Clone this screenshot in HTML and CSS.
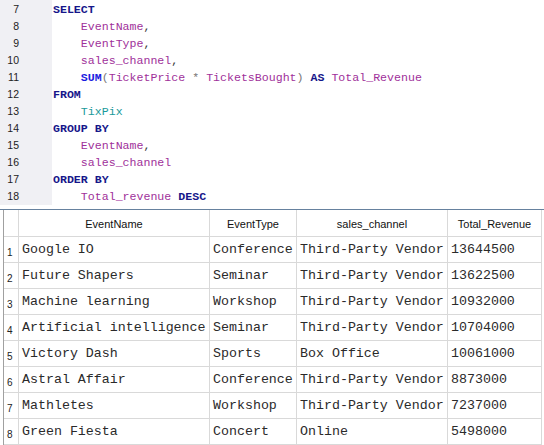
FILE: index.html
```html
<!DOCTYPE html>
<html>
<head>
<meta charset="utf-8">
<link rel="stylesheet" href="styles.css">
</head>
<body>
<div class="editor">
  <div class="gutter">
    <div class="ln">7</div><div class="ln">8</div><div class="ln">9</div><div class="ln">10</div>
    <div class="ln">11</div><div class="ln">12</div><div class="ln">13</div><div class="ln">14</div>
    <div class="ln">15</div><div class="ln">16</div><div class="ln">17</div><div class="ln">18</div>
  </div>
  <div class="code">
<div class="line"><span class="kw">SELECT</span></div>
<div class="line">    <span class="id">EventName</span><span class="p">,</span></div>
<div class="line">    <span class="id">EventType</span><span class="p">,</span></div>
<div class="line">    <span class="id">sales_channel</span><span class="p">,</span></div>
<div class="line">    <span class="fn">SUM</span><span class="op">(</span><span class="id">TicketPrice</span> <span class="op">*</span> <span class="id">TicketsBought</span><span class="op">)</span> <span class="kw">AS</span> <span class="id">Total_Revenue</span></div>
<div class="line"><span class="kw">FROM</span></div>
<div class="line">    <span class="tb">TixPix</span></div>
<div class="line"><span class="kw">GROUP BY</span></div>
<div class="line">    <span class="id">EventName</span><span class="p">,</span></div>
<div class="line">    <span class="id">sales_channel</span></div>
<div class="line"><span class="kw">ORDER BY</span></div>
<div class="line">    <span class="id">Total_revenue</span> <span class="kw">DESC</span></div>
  </div>
</div>
<div class="divider"></div>
<div class="results">
  <div class="grid">
    <div class="hd rn"></div>
    <div class="hd">EventName</div>
    <div class="hd">EventType</div>
    <div class="hd">sales_channel</div>
    <div class="hd">Total_Revenue</div>

    <div class="rn">1</div><div class="c">Google IO</div><div class="c">Conference</div><div class="c">Third-Party Vendor</div><div class="c">13644500</div>
    <div class="rn">2</div><div class="c">Future Shapers</div><div class="c">Seminar</div><div class="c">Third-Party Vendor</div><div class="c">13622500</div>
    <div class="rn">3</div><div class="c">Machine learning</div><div class="c">Workshop</div><div class="c">Third-Party Vendor</div><div class="c">10932000</div>
    <div class="rn">4</div><div class="c">Artificial intelligence</div><div class="c">Seminar</div><div class="c">Third-Party Vendor</div><div class="c">10704000</div>
    <div class="rn">5</div><div class="c">Victory Dash</div><div class="c">Sports</div><div class="c">Box Office</div><div class="c">10061000</div>
    <div class="rn">6</div><div class="c">Astral Affair</div><div class="c">Conference</div><div class="c">Third-Party Vendor</div><div class="c">8873000</div>
    <div class="rn">7</div><div class="c">Mathletes</div><div class="c">Workshop</div><div class="c">Third-Party Vendor</div><div class="c">7237000</div>
    <div class="rn">8</div><div class="c">Green Fiesta</div><div class="c">Concert</div><div class="c">Online</div><div class="c">5498000</div>
  </div>
</div>
</body>
</html>
```

FILE: styles.css
```css
html, body {
  margin: 0;
  padding: 0;
  background: #ffffff;
}
body {
  width: 544px;
  height: 445px;
  overflow: hidden;
}
.editor {
  display: flex;
  height: 209px;
  background: #ffffff;
}
.gutter {
  width: 52px;
  height: 205px;
  background: #f0f0f4;
  padding-top: 1px;
  box-sizing: border-box;
}
.ln {
  height: 17px;
  line-height: 17px;
  width: 19px;
  text-align: right;
  font-family: "Liberation Sans", Arial, sans-serif;
  font-size: 10.5px;
  color: #222222;
}
.code {
  padding-top: 1px;
  padding-left: 1px;
  font-family: "Liberation Mono", "Courier New", monospace;
  font-size: 11.6px;
  color: #333333;
}
.line {
  height: 17px;
  line-height: 17px;
  white-space: pre;
}
.kw { color: #16168a; font-weight: bold; }
.id { color: #a0309a; }
.fn { color: #1c1ce0; font-weight: bold; }
.tb { color: #1a9a9a; }
.op { color: #777777; }
.p { color: #333333; }
.divider {
  height: 1px;
  background: #66819e;
}
.results {
  padding-left: 3px;
}
.grid {
  display: grid;
  grid-template-columns: 14px 190px 86px 150px 93px;
  grid-template-rows: 26px repeat(8, 25px);
  gap: 1px;
  width: 539px;
  box-sizing: border-box;
  padding: 0 1px 1px 0;
  border-left: 1px solid #a0a0a0;
  background: #d9d9d9;
}
.grid > div {
  background: #ffffff;
}
.hd {
  font-family: "Liberation Sans", Arial, sans-serif;
  font-size: 11px;
  color: #111111;
  text-align: center;
  padding-top: 8px;
  box-sizing: border-box;
}
.rn {
  font-family: "Liberation Sans", Arial, sans-serif;
  font-size: 10px;
  color: #222222;
  padding-left: 3px;
  padding-top: 10px;
  box-sizing: border-box;
}
.c {
  font-family: "Liberation Mono", "Courier New", monospace;
  font-size: 13.3px;
  color: #2a2a2a;
  padding-left: 3px;
  display: flex;
  align-items: center;
  white-space: pre;
  overflow: hidden;
}
```
